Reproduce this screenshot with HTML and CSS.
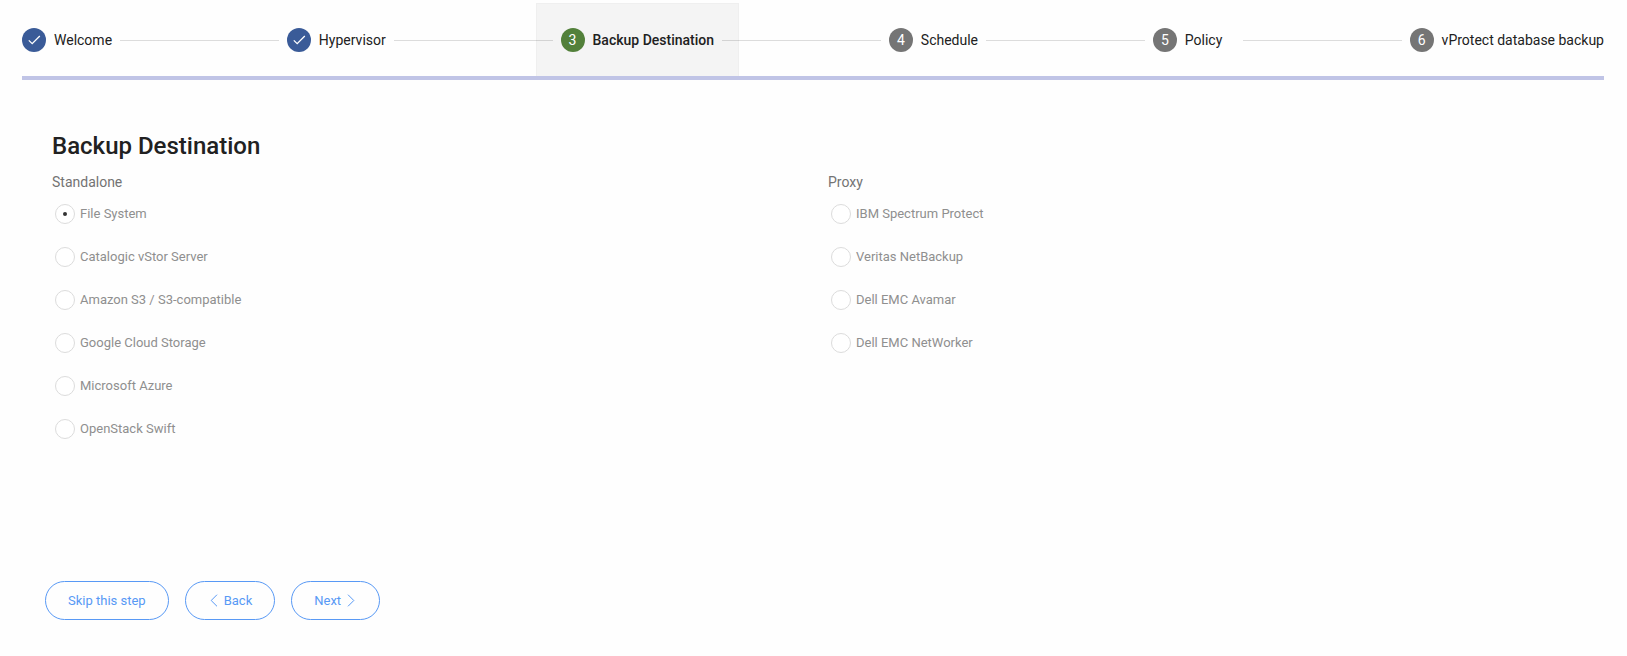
FILE: index.html
```html
<!DOCTYPE html>
<html lang="en">
<head>
<meta charset="utf-8">
<title>Backup Destination</title>
<meta name="viewport" content="width=device-width, initial-scale=1">
<link rel="stylesheet" href="styles.css">
</head>
<body>
<main class="wizard">
  <ol class="stepper">
    <li class="step"><span class="step-icon done"><svg viewBox="0 0 24 24" aria-hidden="true"><path d="M6.8 12.4l3.4 3.3L17.8 8"/></svg></span><span class="step-label">Welcome</span></li>
    <li class="step-line" aria-hidden="true"></li>
    <li class="step"><span class="step-icon done"><svg viewBox="0 0 24 24" aria-hidden="true"><path d="M6.8 12.4l3.4 3.3L17.8 8"/></svg></span><span class="step-label">Hypervisor</span></li>
    <li class="step-line" aria-hidden="true"></li>
    <li class="step active" aria-current="step"><span class="step-icon">3</span><span class="step-label">Backup Destination</span></li>
    <li class="step-line" aria-hidden="true"></li>
    <li class="step"><span class="step-icon">4</span><span class="step-label">Schedule</span></li>
    <li class="step-line" aria-hidden="true"></li>
    <li class="step"><span class="step-icon">5</span><span class="step-label">Policy</span></li>
    <li class="step-line" aria-hidden="true"></li>
    <li class="step"><span class="step-icon">6</span><span class="step-label">vProtect database backup</span></li>
  </ol>
  <form class="panel">
    <h1 class="title">Backup Destination</h1>
    <div class="columns">
      <fieldset class="group">
        <legend class="group-title">Standalone</legend>
        <label class="option"><input class="radio" type="radio" name="destination" checked>File System</label>
        <label class="option"><input class="radio" type="radio" name="destination">Catalogic vStor Server</label>
        <label class="option"><input class="radio" type="radio" name="destination">Amazon S3 / S3-compatible</label>
        <label class="option"><input class="radio" type="radio" name="destination">Google Cloud Storage</label>
        <label class="option"><input class="radio" type="radio" name="destination">Microsoft Azure</label>
        <label class="option"><input class="radio" type="radio" name="destination">OpenStack Swift</label>
      </fieldset>
      <fieldset class="group">
        <legend class="group-title">Proxy</legend>
        <label class="option"><input class="radio" type="radio" name="destination">IBM Spectrum Protect</label>
        <label class="option"><input class="radio" type="radio" name="destination">Veritas NetBackup</label>
        <label class="option"><input class="radio" type="radio" name="destination">Dell EMC Avamar</label>
        <label class="option"><input class="radio" type="radio" name="destination">Dell EMC NetWorker</label>
      </fieldset>
    </div>
  </form>
  <div class="actions">
    <button class="button" type="button">Skip this step</button>
    <button class="button" type="button"><svg class="chevron" viewBox="0 0 12 13" aria-hidden="true"><path d="M9 .7L3.2 6.5 9 12.3"/></svg>Back</button>
    <button class="button" type="button">Next<svg class="chevron" viewBox="0 0 12 13" aria-hidden="true"><path d="M3 .7l5.8 5.8L3 12.3"/></svg></button>
  </div>
</main>
</body>
</html>
```
FILE: styles.css
```css
* {
  box-sizing: border-box;
}

body {
  margin: 0;
  background: #fefefe;
  color: #212121;
  font-family: Roboto, "Liberation Sans", sans-serif;
  font-size: 14px;
  line-height: 20px;
}

.wizard {
  padding: 3px 23px 0 22px;
}

.stepper {
  display: flex;
  gap: 8px;
  margin: 0;
  padding: 0;
  list-style: none;
  border-bottom: 4px solid #c0c4e6;
}

.step {
  display: flex;
  align-items: center;
  gap: 8px;
  height: 73px;
  white-space: nowrap;
}

.step-icon {
  display: flex;
  align-items: center;
  justify-content: center;
  width: 24px;
  height: 24px;
  border-radius: 50%;
  background: #757575;
  color: #fff;
}

.step-icon.done {
  background: #3a5b98;
}

.step-icon svg {
  width: 24px;
  height: 24px;
  fill: none;
  stroke: #fff;
  stroke-width: 1.3;
}

.step-label {
  min-width: 50px;
}

.step.active {
  position: relative;
  margin: 0 -25px;
  padding: 0 24px;
  border: 1px solid rgba(0, 0, 0, 0.02);
  border-bottom: 0;
  background: rgba(0, 0, 0, 0.04);
  font-weight: 500;
}

.active .step-icon {
  background: #52803a;
  font-weight: 400;
}

.step-line {
  flex: 1;
  align-self: center;
  height: 1px;
  margin-top: 1px;
  background: #dcdcdc;
}

.panel {
  padding: 48px 30px 0;
}

.title {
  margin: 0;
  font-size: 24px;
  font-weight: 500;
  line-height: 36px;
}

.columns {
  display: grid;
  grid-template-columns: 1fr 1fr;
  gap: 30px;
  min-height: 417px;
  padding-top: 8px;
}

.group {
  min-width: 0;
  margin: 0;
  padding: 0;
  border: 0;
}

.group-title {
  padding: 0;
  color: #737373;
}

.option {
  display: flex;
  align-items: center;
  gap: 5px;
  height: 43px;
  padding-left: 3px;
  color: #8f8f8f;
  font-size: 13px;
}

.radio {
  display: flex;
  align-items: center;
  justify-content: center;
  width: 20px;
  height: 20px;
  margin: 0;
  border: 1px solid #dcdcdc;
  border-radius: 50%;
  background: #fff;
  appearance: none;
}

.radio:checked::before {
  width: 4px;
  height: 4px;
  border-radius: 50%;
  background: #333;
  content: "";
}

.actions {
  display: flex;
  gap: 16px;
  padding: 0 23px 36px;
}

.button {
  display: flex;
  align-items: center;
  gap: 4px;
  height: 39px;
  padding: 0 22px;
  border: 1px solid #5899f5;
  border-radius: 20px;
  background: transparent;
  color: #5899f5;
  font: 400 13px/20px Roboto, "Liberation Sans", sans-serif;
  white-space: nowrap;
}

.chevron {
  width: 12px;
  height: 13px;
  fill: none;
  stroke: currentColor;
  stroke-width: 1;
}
```
